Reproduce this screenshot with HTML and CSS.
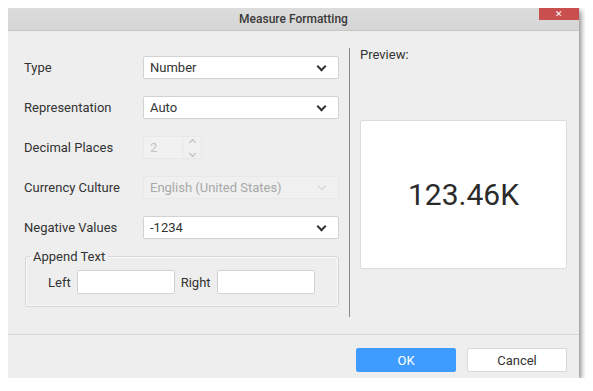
FILE: index.html
```html
<!DOCTYPE html>
<html lang="en">
<head>
    <meta charset="UTF-8">
    <title>Measure Formatting</title>
    <link rel="stylesheet" href="styles.css">
</head>
<body>
    <div class="dialog">
        <div class="titlebar">
            Measure Formatting
            <span class="close">&#x2715;</span>
        </div>
        <div class="content">
            <div class="left">
                <div class="row">
                    <span class="label">Type</span>
                    <div class="select">Number<span class="chev"></span></div>
                </div>
                <div class="row">
                    <span class="label">Representation</span>
                    <div class="select">Auto<span class="chev"></span></div>
                </div>
                <div class="row">
                    <span class="label">Decimal Places</span>
                    <div class="spin">
                        <span class="spin-val">2</span>
                        <span class="spin-btns">
                            <span class="up"></span>
                            <span class="down"></span>
                        </span>
                    </div>
                </div>
                <div class="row">
                    <span class="label">Currency Culture</span>
                    <div class="select disabled">English (United States)<span class="chev"></span></div>
                </div>
                <div class="row">
                    <span class="label">Negative Values</span>
                    <div class="select">-1234<span class="chev"></span></div>
                </div>
                <fieldset class="append">
                    <legend>Append Text</legend>
                    <div class="append-row">
                        <span class="small-label">Left</span>
                        <input type="text" class="text-box">
                        <span class="small-label">Right</span>
                        <input type="text" class="text-box">
                    </div>
                </fieldset>
            </div>
            <div class="divider"></div>
            <div class="right">
                <div class="preview-title">Preview:</div>
                <div class="preview-box">123.46K</div>
            </div>
        </div>
        <div class="footer">
            <button class="btn btn-ok">OK</button>
            <button class="btn">Cancel</button>
        </div>
    </div>
</body>
</html>
```

FILE: styles.css
```css
/* Dialog frame */
body {
    margin: 8px;
    background-color: #ffffff;
    font-family: Roboto, "Liberation Sans", sans-serif;
    font-size: 13px;
    color: #333333;
}

.dialog {
    width: 571px;
    height: 370px;
    background-color: #eeeeee;
    display: flex;
    flex-direction: column;
    box-shadow: 2px 3px 6px rgba(0, 0, 0, 0.45), 0 0 4px rgba(0, 0, 0, 0.12);
}

.titlebar {
    position: relative;
    height: 22px;
    display: flex;
    align-items: center;
    justify-content: center;
    background: linear-gradient(#dcdcdc, #d5d5d5);
    border-bottom: 1px solid #c6c6c6;
    font-size: 12px;
    font-weight: 500;
    color: #3a3a3a;
}

.close {
    position: absolute;
    top: 0;
    right: 0;
    width: 40px;
    height: 12px;
    background-color: #c94f4f;
    color: #ffffff;
    font-size: 9px;
    line-height: 12px;
    text-align: center;
}

/* Body */
.content {
    flex: 1;
    display: flex;
}

.left {
    width: 315px;
    padding: 25px 10px 0 16px;
}

.row {
    display: flex;
    align-items: center;
    height: 23px;
    margin-bottom: 17px;
}

.label {
    width: 119px;
    color: #333333;
}

.select {
    position: relative;
    width: 188px;
    height: 21px;
    line-height: 21px;
    padding-left: 6px;
    background-color: #ffffff;
    border: 1px solid #d2d2d2;
    border-radius: 2px;
    color: #333333;
}

.chev {
    position: absolute;
    right: 13px;
    top: 6px;
    width: 5px;
    height: 5px;
    border-right: 2px solid #333333;
    border-bottom: 2px solid #333333;
    transform: rotate(45deg);
}

.select.disabled {
    background-color: #f0f0f0;
    border-color: #e8e8e8;
    color: #a8a8a8;
}

.select.disabled .chev {
    border-color: #d0d0d0;
    border-width: 1px;
}

.spin {
    display: flex;
    height: 23px;
}

.spin-val {
    width: 32px;
    height: 21px;
    line-height: 21px;
    padding-left: 6px;
    background-color: #f1f1f1;
    border: 1px solid #e8e8e8;
    border-radius: 2px 0 0 2px;
    color: #c4c4c4;
}

.spin-btns {
    width: 18px;
    display: flex;
    flex-direction: column;
    align-items: center;
    justify-content: center;
    gap: 6px;
    border: 1px solid #e8e8e8;
    border-left: none;
    background-color: #f0f0f0;
}

.up, .down {
    width: 4px;
    height: 4px;
    border-left: 1px solid #b5b5b5;
    border-top: 1px solid #b5b5b5;
    transform: rotate(45deg);
}

.down {
    transform: rotate(225deg);
}

.append {
    margin: -7px 0 0 1px;
    padding: 6px 0 12px 4px;
    width: 308px;
    border: 1px solid #d6d6d6;
    border-radius: 3px;
    box-shadow: inset 0 0 0 1px #fafafa;
}

.append legend {
    padding: 0 3px;
    color: #333333;
}

.append-row {
    display: flex;
    align-items: center;
    padding-left: 18px;
}

.small-label {
    margin-right: 6px;
}

.text-box {
    width: 96px;
    height: 22px;
    padding: 0;
    margin: 0 6px 0 0;
    border: 1px solid #d2d2d2;
    border-radius: 2px;
    background-color: #ffffff;
}

.divider {
    width: 0;
    border-left: 1px solid #8a8a8a;
    margin: 17px 0 17px 0;
}

.right {
    flex: 1;
    padding: 16px 12px 0 10px;
}

.preview-title {
    color: #333333;
}

.preview-box {
    margin-top: 58px;
    height: 147px;
    background-color: #ffffff;
    border: 1px solid #dcdcdc;
    border-radius: 2px;
    display: flex;
    align-items: center;
    justify-content: center;
    font-size: 30px;
    color: #2b2b2b;
}

/* Footer */
.footer {
    height: 44px;
    border-top: 1px solid #d8d8d8;
    display: flex;
    justify-content: flex-end;
    align-items: flex-start;
    padding: 13px 12px 0 0;
    box-sizing: border-box;
    gap: 11px;
}

.btn {
    width: 100px;
    height: 24px;
    font-family: Roboto, "Liberation Sans", sans-serif;
    font-size: 13px;
    color: #333333;
    background-color: #ffffff;
    border: 1px solid #d6d6d6;
    border-radius: 2px;
}

.btn-ok {
    background-color: #3e9bff;
    border-color: #3e9bff;
    color: #ffffff;
}
```
